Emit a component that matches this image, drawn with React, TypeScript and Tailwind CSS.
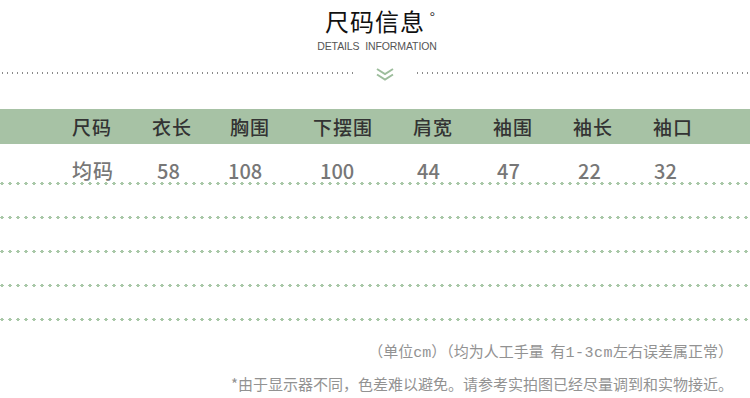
const headers = ['尺码', '衣长', '胸围', '下摆围', '肩宽', '袖围', '袖长', '袖口'];
const values = ['均码', '58', '108', '100', '44', '47', '22', '32'];

function GreenDots() {
  return (
    <div className="h-[3px] w-full bg-[radial-gradient(circle,#a9c8a8_1.5px,transparent_1.7px)] bg-[length:8px_3px] bg-[position:-2px_0]" />
  );
}

function GrayDots({ className }: { className?: string }) {
  return (
    <div
      className={`h-[2px] bg-[radial-gradient(circle,#8a8a8a_0.9px,transparent_1.1px)] bg-[length:5px_2px] ${className ?? ''}`}
    />
  );
}

const mono = { fontFamily: '"Liberation Mono", monospace' };

export default function App() {
  return (
    <div
      className="w-[750px] h-[398px] bg-white overflow-hidden"
      style={{ fontFamily: '"Noto Sans CJK SC", "Noto Sans", sans-serif' }}
    >
      {/* title */}
      <div className="pt-[5px] flex justify-center">
        <div className="relative text-[24px] leading-[32px] text-[#111] tracking-[1px]">
          尺码信息
          <span className="absolute -right-[11px] -top-[4px] text-[14px] text-[#333]">°</span>
        </div>
      </div>
      <div
        className="mt-[3px] text-center text-[10.5px] leading-[12px] text-[#555] tracking-[-0.1px] pl-[4px]"
        style={{ fontFamily: '"Liberation Sans", sans-serif' }}
      >
        DETAILS&nbsp;&nbsp;INFORMATION
      </div>

      {/* divider with chevron */}
      <div className="mt-[13px] h-[16px] flex items-center">
        <GrayDots className="w-[355px]" />
        <div className="w-[60px] flex justify-center pt-[2px]">
          <svg width="20" height="15" viewBox="0 0 20 15" fill="none" stroke="#9dbd9c" strokeWidth="2">
            <path d="M2 2 L10 7 L18 2" />
            <path d="M2 7.5 L10 12.5 L18 7.5" />
          </svg>
        </div>
        <GrayDots className="flex-1" />
      </div>

      {/* table header */}
      <div className="mt-[28px] h-[35px] bg-[#a7c2a5] grid grid-cols-[80px_78px_83px_100px_80px_80px_80px_97px] pl-[72px] items-center text-[19px] leading-[24px] text-[#333] font-medium">
        {headers.map(h => (
          <div key={h} className="tracking-[1px]">{h}</div>
        ))}
      </div>

      {/* values */}
      <div className="h-[38px] pt-[16px] grid grid-cols-[85px_71px_92px_97px_80px_81px_76px_80px] pl-[72px] text-[20px] leading-[22px] text-[#777] font-medium">
        {values.map(v => (
          <div key={v} className={v === '均码' ? 'tracking-[1px]' : ''}>{v}</div>
        ))}
      </div>
      <GreenDots />
      <div className="h-[31px]" />
      <GreenDots />
      <div className="h-[31px]" />
      <GreenDots />
      <div className="h-[31px]" />
      <GreenDots />
      <div className="h-[31px]" />
      <GreenDots />

      {/* notes */}
      <div className="mt-[20px] pr-[17px] text-right text-[15px] leading-[20px] text-[#929292]">
        （单位<span style={mono} className="text-[15px]">cm</span>）（均为人工手量&nbsp;&nbsp;有
        <span style={mono} className="text-[15px] tracking-[0.5px]">1-3cm</span>左右误差属正常）
      </div>
      <div className="mt-[10px] pr-[17px] text-right text-[15px] leading-[20px] text-[#929292]">
        *由于显示器不同，色差难以避免。请参考实拍图已经尽量调到和实物接近。
      </div>
    </div>
  );
}
